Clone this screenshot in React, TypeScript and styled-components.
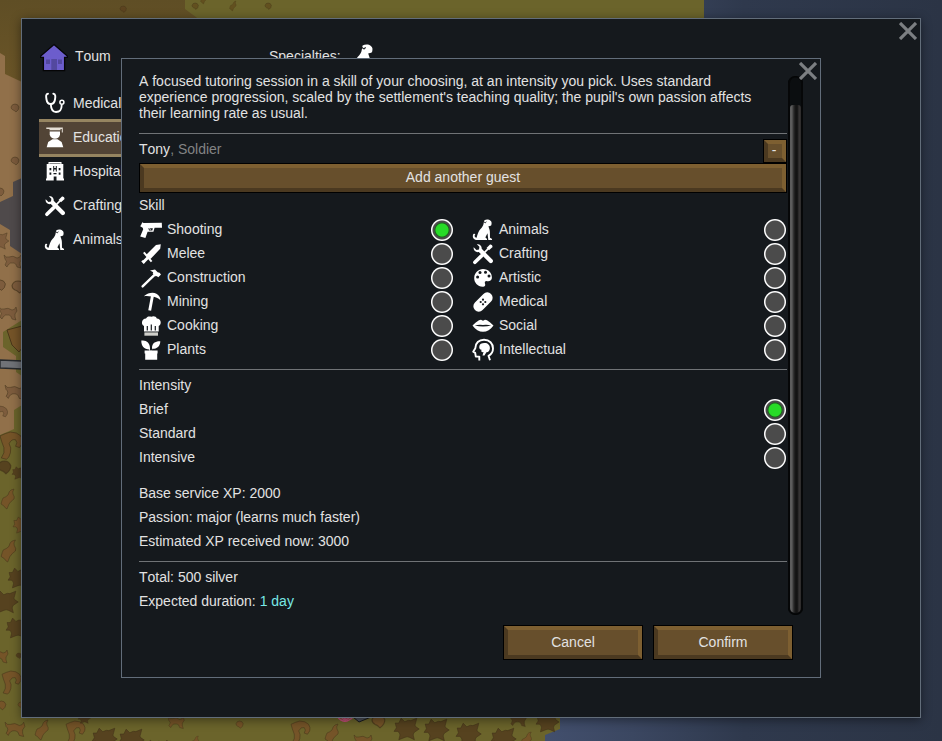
import React, { useState } from "react";
import styled, { createGlobalStyle, css } from "styled-components";

const GlobalStyle = createGlobalStyle`
  *, *::before, *::after { box-sizing: border-box; }
  body {
    margin: 0;
    background: #2b3445;
    color: #e2e2e2;
    font-family: "Liberation Sans", Arial, sans-serif;
    font-size: 14px;
    line-height: 24px;
    font-kerning: none;
  }
  button, input { font: inherit; font-kerning: none; color: inherit; }
`;

/* ---------- world map ---------- */

const MapDrawing = styled.svg`
  position: absolute;
  inset: 0;
  width: 100%;
  height: 100%;
  z-index: -1;
`;

const blobShapes: Record<string, string> = {
  calf: "M0 2Q2 5 5 4Q9 2 13 5Q16 5 17 2L18 6Q15 9 16 12L17 15L13 14Q12 10 10 10Q6 9 4 12L3 14L1 12Q4 8 1 6Z",
  bird: "M1 15Q2 11 3 9Q6 8 8 6Q9 2 11 1L14 0Q12 3 13 5Q15 8 14 10Q11 12 9 15L7 20Q5 19 4 17Z",
  hook: "M0 3Q4 1 8 0Q13 0 16 3Q18 6 17 9L15 12L12 11Q14 8 12 6Q9 5 7 9Q9 12 8 16Q7 20 5 21L1 20Q4 16 3 12Q1 7 0 3Z",
  beast: "M1 5L4 5L6 1L9 4Q12 2 14 3L19 1L18 5Q17 7 18 8L21 10L18 12Q16 13 16 15L17 19L13 17Q11 16 9 17L4 19L5 15Q5 13 3 12L0 12L2 9Z",
  pebble: "M0 3Q1 0 4 0Q7 0 8 3Q8 6 5 8Q3 6 2 6Q0 5 0 3Z",
};

type Blob = [string, number, number, number, string];
const light = "#755428";
const dark = "#56421f";
const sand = "#7d5c3d";
const faint = "#62501f";

const blobs: Blob[] = [
  ["pebble", 120, 6, 0.8, "#5d4420"],
  ["bird", 229, 1, 0.5, faint], ["pebble", 192, 3, 0.8, faint],
  ["pebble", 265, 3, 0.8, faint], ["bird", 200, -6, 0.5, faint],
  ["pebble", 11, 104, 1, sand], ["pebble", 11, 157, 1, sand],
  ["pebble", -4, 188, 1, sand],
  ["beast", -10, 232, 0.9, sand], ["calf", 4, 253, 1, sand],
  ["pebble", -5, 280, 1.3, sand], ["pebble", 12, 281, 1.5, sand],
  ["calf", -1, 305, 1, sand], ["calf", 5, 383, 1.1, sand],
  ["hook", -8, 406, 0.9, sand], ["hook", 0, 432, 1.3, light],
  ["pebble", -2, 461, 1.6, dark], ["beast", 12, 466, 0.7, dark],
  ["bird", 0, 489, 1, light], ["beast", 13, 516, 0.9, light],
  ["bird", 0, 540, 1.1, light], ["beast", 8, 567, 1.1, dark],
  ["beast", -7, 590, 1.2, dark], ["beast", 6, 617, 1.1, dark],
  ["calf", -10, 648, 1, light], ["pebble", 16, 653, 0.7, dark],
  ["hook", 2, 671, 1.1, light], ["pebble", -3, 701, 1.1, light],
  ["pebble", 18, 702, 0.8, light], ["calf", 5, 720, 1.1, light],
  ["bird", 34, 720, 1, light], ["hook", 66, 721, 1.1, light],
  ["beast", 92, 727, 1.2, dark], ["beast", 119, 728, 1.2, dark],
  ["beast", 78, 712, 0.6, dark], ["calf", 150, 738, 1, light],
  ["bird", 190, 736, 0.6, light], ["calf", 168, 715, 0.9, light],
  ["pebble", 236, 721, 0.9, light], ["hook", 291, 721, 1.1, light],
  ["bird", 324, 724, 1, light], ["calf", 354, 733, 1, light],
  ["pebble", 372, 715, 1.6, light], ["beast", 394, 717, 1.2, dark],
  ["beast", 424, 718, 1.2, dark], ["beast", 456, 722, 1.2, dark],
  ["beast", 491, 727, 1.2, dark], ["calf", 510, 713, 0.9, dark],
  ["beast", 536, 711, 1.1, dark], ["bird", 520, 732, 0.8, light],
];

function WorldMap() {
  return (
    <MapDrawing viewBox="0 0 942 741" preserveAspectRatio="xMidYMid slice" aria-hidden="true">
      <defs>
        <linearGradient id="sea" x1="0" x2="1">
          <stop offset="0" stopColor="#424f6d" />
          <stop offset="0.22" stopColor="#3b4761" />
          <stop offset="0.5" stopColor="#2f394d" />
          <stop offset="1" stopColor="#2b3445" />
        </linearGradient>
        <linearGradient id="brush" x1="0" x2="0" y1="0" y2="1">
          <stop offset="0" stopColor="#5f4e25" />
          <stop offset="1" stopColor="#6b5527" />
        </linearGradient>
      </defs>
      <rect width="942" height="741" fill="#6b642b" />
      <path d="M704 0H942V741H545V735L560 729V717L703 400Z" fill="url(#sea)" />
      <path d="M0 0H185V9L200 20V90H0Z" fill="url(#brush)" />
      <path d="M0 53L5 56V74L22 82V405L14 410V429L0 435Z" fill="#91704a" />
      <path d="M22 178L13 182V196L0 202V224L10 230V246L22 254Z" fill="#4f4a4b" />
      <path d="M22 320L3 332V347L16 356V372L22 376Z" fill="#6b642b" />
      <path d="M22 326L7 330L12 345L19 352L22 348Z" fill={light} stroke="#4a3719" />
      <path d="M0 360L22 361V369L0 368Z" fill="#707277" stroke="#26292d" strokeWidth="1.4" />
      {blobs.map(([shape, x, y, scale, fill], i) => (
        <path
          key={i}
          d={blobShapes[shape]}
          transform={`translate(${x} ${y}) scale(${scale})`}
          fill={fill}
          stroke="#3d2f17"
          strokeOpacity="0.6"
          strokeWidth="0.7"
          strokeLinejoin="round"
        />
      ))}
      <path d="M353 717L371 717L359 722Z" fill="#4a4e58" stroke="#17191c" />
      <path d="M337 716q7 10 16 1m-12 0q4 5 9 0m-5 0v5" fill="none" stroke="#c24f79" strokeWidth="1.4" />
    </MapDrawing>
  );
}

/* ---------- icons ---------- */

const Glyph = styled.svg<{ $size?: number }>`
  flex: none;
  width: ${(p) => p.$size ?? 24}px;
  height: ${(p) => p.$size ?? 24}px;
  overflow: visible;
  fill: #fff;
`;

const paper = "#15191d";

const drawings: Record<string, React.ReactNode> = {
  gun: (
    <>
      <path d="M3.3 5.3L4.6 6L22.8 5.8L23 10.7H15.6L14.4 14.7H8.6L6.4 21L1.2 19.4L4.2 12.2L3.7 10.7L1.2 9.2L2.3 7.4Z" />
      <path d="M9.3 11.3h4.6l-.6 2.3h-3.2z" fill={paper} />
      <path d="M10.6 11.3l.8 1.6" stroke="#fff" strokeWidth=".9" />
    </>
  ),
  sword: (
    <>
      <path d="M21.8 3.2L21.2 7.8L11.5 18L7 14L17 3.9Z" />
      <path d="M4.8 11.3L12.6 20.6" stroke="#fff" strokeWidth="2" fill="none" />
      <path d="M9 16.5L4 21.5" stroke="#fff" strokeWidth="3" fill="none" />
      <path d="M2.2 20.2L4.2 19L6.2 21.3L4.6 23Z" />
    </>
  ),
  hammer: (
    <>
      <path d="M3.6 21.4L15.5 9.8" stroke="#fff" strokeWidth="2.4" strokeLinecap="round" />
      <path d="M11 5.5L16 4.5L18.7 7.2L20.6 7.7L22 9.5L19.3 12.3L17.6 11L16.9 11.6L13.6 8.3L14.3 7.2Z" />
    </>
  ),
  pick: (
    <>
      <path d="M4.8 7.2C9 3.5 14.5 2.8 17.4 4.8C20 6.5 21.4 8.5 21.6 11.3C18.5 8.6 15.5 8 12.8 7.6C10 7 7.5 6.7 4.8 7.2Z" />
      <path d="M13.6 6L10.7 21.5" stroke="#fff" strokeWidth="2.9" />
    </>
  ),
  chef: (
    <>
      <path d="M5 18.5V13C1.7 11.5 2.5 5.8 7 5.6C8 3 10.5 3.2 12.3 3.8C14.5 2.6 17.3 3.5 17.8 5.6C22.3 5.9 23 11.5 19.7 13V18.5Z" />
      <path d="M8.3 17.5V13M12.3 17.5V11.5M16.3 17.5V13" stroke={paper} strokeWidth="1.2" />
      <path d="M5.4 19.4H19V22.7H5.4Z" fill="#cfcfca" />
    </>
  ),
  plant: (
    <>
      <path d="M2.3 3.6C7 2.7 11 5.5 11 11.3V14H13V11C13 6 16.5 4 21.3 4.2C21.3 9.5 17.5 12 13.2 11.8L13 13.8H10.3V12.5C5 12.5 2.2 9 2.3 3.6Z" />
      <path d="M5.6 13.6H18.6V16.5H18.2V22.8H6.2V16.5H5.6Z" />
    </>
  ),
  dog: (
    <>
      <path d="M13.2 3.4C15 2.2 18 2.3 19.2 3.6C20.8 4.5 20.9 6.4 20.3 8.2C19.6 9.2 18 9 17.4 9.3C18 11.5 19 13 18.9 15.5L19 20.8C20.5 21.3 21.4 22 21 23H17.3L16.5 16.2C15.7 18 14.5 19.2 14.5 20.8C15.8 21.4 16.3 22 16 23H5C2.5 22.5 1.4 20.8 1.9 18.3C2.3 16.5 3.9 16.5 4.4 17.5C3.2 18.2 3.3 20.5 5.6 20.8C6.5 17.5 7.4 14.2 9.5 12C11.3 10.2 12.3 8.5 12.6 6.5Z" />
      <path d="M12.8 4.8Q14.7 7 15.3 4.6" stroke={paper} fill="none" strokeWidth=".9" />
    </>
  ),
  tools: (
    <>
      <path d="M2.7 6.3L5.5 9L8 8.5L8.4 5.8L5.8 3.3C8.5 2.6 11 4.7 10.7 7.7L21.6 18.8C23 20.8 20.6 23.2 18.6 21.8L7.8 11C5 11.7 2 9.5 2.7 6.3Z" />
      <path d="M3.9 21.3L10.5 14.9" stroke="#fff" strokeWidth="3.6" strokeLinecap="round" />
      <path d="M11 14L17 7.8" stroke="#fff" strokeWidth="1.7" />
      <path d="M15.5 7L19 3.5Q21.5 3 21.6 6L18 9.3Z" />
    </>
  ),
  palette: (
    <>
      <path d="M12 4C17.5 4 21.2 8 20.9 13C20.5 16.8 17 16.3 15.3 16C13.3 16.2 13.8 18 14.2 19.3C14.5 21 13.5 22 11.7 21.8C6.5 21.3 3 17.5 3.2 12.7C3.5 7.5 7.5 4 12 4Z" />
      <g fill={paper}>
        <circle cx="6.6" cy="12" r="1.5" />
        <circle cx="9" cy="7.6" r="1.5" />
        <circle cx="14.5" cy="7.2" r="1.5" />
        <circle cx="18" cy="11" r="1.5" />
      </g>
    </>
  ),
  bandage: (
    <>
      <rect x="0.6" y="7.6" width="22.8" height="10.8" rx="5.4" transform="rotate(-45 12 13)" />
      <g fill={paper}>
        <circle cx="12" cy="10.7" r="1.1" />
        <circle cx="12" cy="15.3" r="1.1" />
        <circle cx="9.7" cy="13" r="1.1" />
        <circle cx="14.3" cy="13" r="1.1" />
      </g>
    </>
  ),
  lips: (
    <>
      <path d="M1.5 12.5C4.5 10 7.5 6.7 10 6.8L12 7.8L14 6.8C16.5 6.7 19.5 10 22.5 12.5C19.5 16.5 16 18.8 12 18.8C8 18.8 4.5 16.5 1.5 12.5Z" />
      <path d="M3.8 12.5Q8 11.3 12 12Q16 11.3 20.2 12.5Q12 14.7 3.8 12.5Z" fill={paper} />
    </>
  ),
  mind: (
    <>
      <path d="M8.3 23.5V19.6H4.8L4.2 15.8L2.2 14.7L4.3 11.3C4.3 6 8 2.8 13 2.8C18.5 2.8 22 6.5 22 11.5C22 15 20.5 17.3 17.5 18.8L19 23.3" fill="none" stroke="#fff" strokeWidth="1.9" strokeLinejoin="round" />
      <path d="M8.3 9.5C8.5 6.8 11 6 12 6.3C15 5 19.2 7 18.9 11.3C18.6 14.5 17 15.5 15.4 15.3L13.5 18.5H11.5L12.5 15C10.5 15.5 10 14.5 10.5 12.8C8.8 12.5 8 11.5 8.3 9.5Z" />
    </>
  ),
  stethoscope: (
    <>
      <path d="M5 2.7C2.6 3 3 5.5 3.5 8.5C4 12 5.5 13 7.7 13C10 13 11.5 12 12 8.5C12.5 5.5 12.7 3 10.3 2.7" fill="none" stroke="#fff" strokeWidth="1.9" strokeLinecap="round" />
      <path d="M7.8 13C8 18 9.3 21 13 21C18.3 21 18.7 17.5 18.7 13.8" fill="none" stroke="#fff" strokeWidth="1.9" />
      <circle cx="18.9" cy="11.3" r="2" fill="none" stroke="#fff" strokeWidth="1.5" />
    </>
  ),
  graduate: (
    <>
      <path d="M3.3 2.5H19.8V7.5H18.8V4H17.5V5.2H6.5V4H3.3Z" fill="#e5dfd6" />
      <path d="M6.7 6.4H17V9.8C16 15 8 15 6.7 9.8Z" />
      <path d="M3.7 22.3L5.2 17L9.5 14.3H14.5L18.6 17L20.3 22.3Z" />
    </>
  ),
  hospital: (
    <>
      <path d="M5.5 3H18.5V5H20.3V19.5H21V21.5H13.5V17.5H10.7V21.5H3V19.5H3.7V5H5.5Z" />
      <g fill={paper}>
        <path d="M6.5 9h1.8v2.2H6.5zM15.7 9h1.8v2.2h-1.8zM6.5 13.5h1.8v2.2H6.5zM15.7 13.5h1.8v2.2h-1.8z" />
        <path d="M10.2 7h1v2h1.6v-2h1v5.500h-1v-2h-1.6v2h-1zM10.500 14h3v1.200h-3zM6.500 4.400h11v.6h-11z" />
      </g>
    </>
  ),
};

function Icon({ name, size }: { name: string; size?: number }) {
  return (
    <Glyph $size={size} viewBox="0 0 24 24" aria-hidden="true">
      {drawings[name]}
    </Glyph>
  );
}

function HouseIcon() {
  return (
    <Glyph $size={28} viewBox="0 0 28 28" aria-hidden="true">
      <path d="M14 0.5L27.3 12V13.3H24.6V26.7H3.4V13.3H0.7V12Z" fill="#6c5dcc" stroke="#050506" strokeWidth="1.3" />
      <path d="M6 15.5h4v4.5H6zM18 15.5h4v4.5h-4zM11.3 15h5.7v11h-5.7z" fill="#53489f" />
    </Glyph>
  );
}

/* ---------- windows ---------- */

const Page = styled.div`
  position: relative;
  z-index: 0;
  display: flex;
  min-height: 100vh;
  padding: 18px 21px 23px;
  overflow: hidden;
`;

const panel = css`
  position: relative;
  background: #15191d;
  border: 1px solid #626d7a;
`;

const SettlementWindow = styled.main`
  ${panel}
  flex: 1;
  display: grid;
  grid-template: minmax(0, 1fr) / minmax(0, 1fr);
  box-shadow: 0 2px 10px rgba(0, 0, 0, 0.45);
`;

const SettlementContent = styled.div`
  grid-area: 1 / 1;
  padding: 17px;
`;

const SettlementHeader = styled.header`
  display: grid;
  grid-template-columns: 230px auto 1fr;
  align-items: center;
  height: 40px;
  margin-bottom: 11px;
`;

const SettlementName = styled.div`
  display: flex;
  align-items: center;
  gap: 7px;
  padding: 3px 0 0 1px;
  line-height: 20px;
`;

const NameText = styled.span`
  padding-bottom: 4px;
`;

const SpecialtyIcons = styled.div`
  display: flex;
  padding: 2px 0 0 4px;
`;

const ServiceNav = styled.nav`
  display: flex;
  flex-direction: column;
  width: 200px;
`;

const ServiceLink = styled.a<{ $active?: boolean }>`
  display: flex;
  align-items: center;
  gap: 6px;
  height: 34px;
  padding: 0 4px 2px;
  color: inherit;
  text-decoration: none;
  ${(p) =>
    p.$active &&
    css`
      position: relative;
      background: #524436;
      border: solid #968561;
      border-width: 1px 0;
      box-shadow: 0 2px #968561, 0 -2px #968561;
    `}
`;

const Dialog = styled.section`
  ${panel}
  grid-area: 1 / 1;
  display: flex;
  flex-direction: column;
  margin: 39px 99px;
  padding: 14px 17px 17px;
`;

const CloseButton = styled.button`
  position: absolute;
  top: 3px;
  right: 3px;
  z-index: 1;
  width: 18px;
  height: 18px;
  padding: 0;
  border: 0;
  background: none;
  cursor: pointer;
  svg { display: block; }
`;

function Close({ label }: { label: string }) {
  return (
    <CloseButton type="button" aria-label={label}>
      <svg width="18" height="18" viewBox="0 0 18 18" aria-hidden="true">
        <path d="M1 1L17 17M17 1L1 17" stroke="#7c7f82" strokeWidth="3.2" />
      </svg>
    </CloseButton>
  );
}

const DialogBody = styled.div`
  flex: 1;
  display: flex;
  gap: 1px;
`;

const DialogContent = styled.div`
  flex: 1;
  min-width: 0;
`;

const ScrollTrack = styled.div`
  width: 15px;
  margin: 3px 0 0;
  padding: 28px 2px 1px;
  border-radius: 7px;
  background: #0b0e10;
  border: 1px solid #040505;
  border-width: 1px 0;
  box-shadow: inset 2px 0 #060708, inset -2px 0 #060708;
`;

const ScrollThumb = styled.div`
  height: 100%;
  border-radius: 3px 3px 5px 5px;
  background: linear-gradient(90deg, #5c5c5c 0 2px, #3a3a3a 3px, #191919 5px, #131313 6px 7px, #1c1c1c 8px, #383636 9px, #2c2a2a 11px);
`;

const Description = styled.p`
  margin: 0;
  padding: 0 16px 4px 0;
  line-height: 16px;
`;

const Divider = styled.hr`
  height: 1px;
  margin: 8px 0 3px;
  border: 0;
  background: #707376;
`;

const GuestRow = styled.div`
  display: flex;
  justify-content: space-between;
  height: 26px;
`;

const Muted = styled.span`
  color: #828384;
`;

const Duration = styled.span`
  color: #78e8e6;
`;

const BevelButton = styled.button<{ $variant?: "wide" | "small" }>`
  display: block;
  width: 138px;
  height: 33px;
  margin: 1px;
  padding: 0 0 2px;
  border: 4px solid;
  border-color: #7d5f31 #7d5f31 #4b3920 #4b3920;
  outline: 1px solid #000;
  background: #674f2c;
  line-height: 20px;
  cursor: pointer;
  ${(p) =>
    p.$variant === "wide" &&
    css`
      width: calc(100% - 2px);
      height: 28px;
      line-height: 16px;
    `}
  ${(p) =>
    p.$variant === "small" &&
    css`
      align-self: flex-end;
      width: 22px;
      height: 22px;
      padding: 0 2px 2px 0;
      line-height: 12px;
    `}
`;

const Group = styled.fieldset`
  min-width: 0;
  margin: 0;
  padding: 0;
  border: 0;
`;

const GroupTitle = styled.legend`
  display: block;
  padding: 0;
`;

const SkillGrid = styled.div`
  display: grid;
  grid-template-columns: calc(50% - 9px) 1fr;
  grid-template-rows: repeat(6, 24px);
  grid-auto-flow: column;
  column-gap: 17px;
`;

const Option = styled.label`
  display: flex;
  height: 24px;
  cursor: pointer;
`;

const OptionText = styled.span<{ $indent?: boolean }>`
  flex: 1;
  padding-left: ${(p) => (p.$indent ? 4 : 0)}px;
`;

const Radio = styled.input`
  appearance: none;
  align-self: flex-end;
  width: 22px;
  height: 22px;
  margin: 0 1px 0 0;
  border-radius: 50%;
  background: radial-gradient(circle, #4b4b4b 9px, #fff 10px);
  cursor: pointer;
  &:checked {
    background: radial-gradient(circle, #27db27 6px, #1e641e 7px, #4b4b4b 8px, #4b4b4b 9px, #fff 10px);
  }
`;

const Summary = styled.div<{ $spaced?: boolean }>`
  padding-top: ${(p) => (p.$spaced ? 12 : 0)}px;
`;

const Line = styled.div`
  height: 24px;
`;

const DialogFooter = styled.footer`
  display: flex;
  justify-content: flex-end;
  gap: 10px;
  margin: 10px 10px 0 0;
`;

const services = [
  ["stethoscope", "Medical"],
  ["graduate", "Education"],
  ["hospital", "Hospitality"],
  ["tools", "Crafting"],
  ["dog", "Animals"],
];

const skills = [
  ["gun", "Shooting"],
  ["sword", "Melee"],
  ["hammer", "Construction"],
  ["pick", "Mining"],
  ["chef", "Cooking"],
  ["plant", "Plants"],
  ["dog", "Animals"],
  ["tools", "Crafting"],
  ["palette", "Artistic"],
  ["bandage", "Medical"],
  ["lips", "Social"],
  ["mind", "Intellectual"],
];

const intensities = ["Brief", "Standard", "Intensive"];

export default function App() {
  const [skill, setSkill] = useState("Shooting");
  const [intensity, setIntensity] = useState("Brief");

  return (
    <Page>
      <GlobalStyle />
      <WorldMap />
      <SettlementWindow>
        <Close label="Close settlement" />
        <SettlementContent>
          <SettlementHeader>
            <SettlementName>
              <HouseIcon />
              <NameText>Toum</NameText>
            </SettlementName>
            <span>Specialties:</span>
            <SpecialtyIcons>
              <Icon name="dog" size={32} />
            </SpecialtyIcons>
          </SettlementHeader>
          <ServiceNav aria-label="Services">
            {services.map(([icon, name]) => (
              <ServiceLink key={name} href={`#${name.toLowerCase()}`} $active={name === "Education"}>
                <Icon name={icon} />
                {name}
              </ServiceLink>
            ))}
          </ServiceNav>
        </SettlementContent>

        <Dialog role="dialog" aria-label="Tutoring session">
          <Close label="Close dialog" />
          <DialogBody>
            <DialogContent>
              <Description>
                A focused tutoring session in a skill of your choosing, at an intensity you pick. Uses standard
                experience progression, scaled by the settlement's teaching quality; the pupil's own passion affects
                their learning rate as usual.
              </Description>
              <Divider />
              <GuestRow>
                <span>
                  Tony<Muted>, Soldier</Muted>
                </span>
                <BevelButton type="button" $variant="small" aria-label="Remove Tony">
                  -
                </BevelButton>
              </GuestRow>
              <BevelButton type="button" $variant="wide">
                Add another guest
              </BevelButton>
              <Group>
                <GroupTitle>Skill</GroupTitle>
                <SkillGrid>
                  {skills.map(([icon, name]) => (
                    <Option key={name}>
                      <Icon name={icon} />
                      <OptionText $indent>{name}</OptionText>
                      <Radio type="radio" name="skill" checked={skill === name} onChange={() => setSkill(name)} />
                    </Option>
                  ))}
                </SkillGrid>
              </Group>
              <Divider />
              <Group>
                <GroupTitle>Intensity</GroupTitle>
                {intensities.map((name) => (
                  <Option key={name}>
                    <OptionText>{name}</OptionText>
                    <Radio
                      type="radio"
                      name="intensity"
                      checked={intensity === name}
                      onChange={() => setIntensity(name)}
                    />
                  </Option>
                ))}
              </Group>
              <Summary $spaced>
                <Line>Base service XP: 2000</Line>
                <Line>Passion: major (learns much faster)</Line>
                <Line>Estimated XP received now: 3000</Line>
              </Summary>
              <Divider />
              <Summary>
                <Line>Total: 500 silver</Line>
                <Line>
                  Expected duration: <Duration>1 day</Duration>
                </Line>
              </Summary>
            </DialogContent>
            <ScrollTrack aria-hidden="true">
              <ScrollThumb />
            </ScrollTrack>
          </DialogBody>
          <DialogFooter>
            <BevelButton type="button">Cancel</BevelButton>
            <BevelButton type="button">Confirm</BevelButton>
          </DialogFooter>
        </Dialog>
      </SettlementWindow>
    </Page>
  );
}
